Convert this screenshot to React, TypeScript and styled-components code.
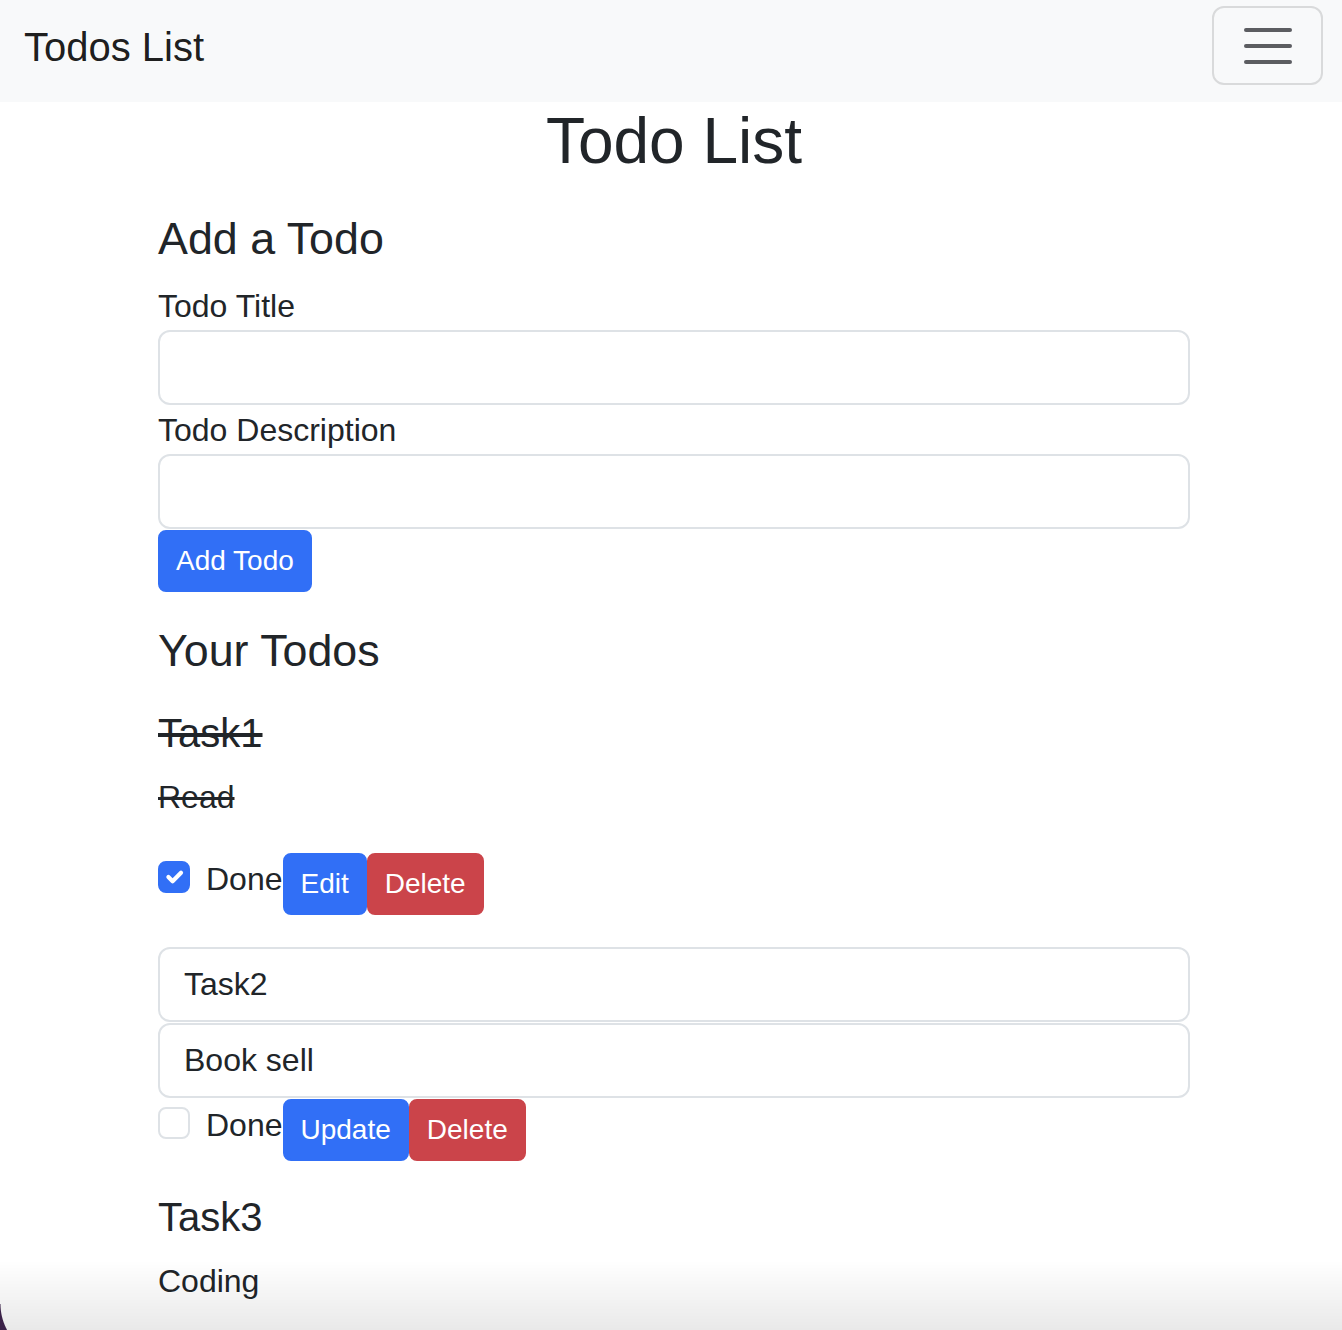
import React, { FC, useState } from 'react';
import styled, { createGlobalStyle } from 'styled-components';

const colors = {
  text: '#212529',
  navbar: '#f8f9fa',
  border: '#dee2e6',
  toggler: '#d9dadb',
  togglerIcon: '#5c5d61',
  primary: '#316ff6',
  danger: '#cb444a',
};

const GlobalStyle = createGlobalStyle`
  *, *::before, *::after {
    box-sizing: border-box;
  }
  html, body {
    margin: 0;
    padding: 0;
    overflow: hidden;
    background: #fff;
  }
  body {
    font-family: "Liberation Sans", Arial, Helvetica, sans-serif;
    font-size: 32px;
    line-height: 1.5;
    color: ${colors.text};
  }
`;

const Navbar = styled.nav`
  display: flex;
  justify-content: space-between;
  align-items: flex-start;
  height: 102px;
  padding: 6px 19px 0 24px;
  background-color: ${colors.navbar};
`;

const Brand = styled.a`
  margin-top: 11px;
  font-size: 40px;
  line-height: 60px;
  color: rgba(0, 0, 0, 0.9);
  text-decoration: none;
`;

const Toggler = styled.button`
  display: flex;
  align-items: center;
  justify-content: center;
  width: 111px;
  height: 79px;
  padding: 0;
  background: transparent;
  border: 2px solid ${colors.toggler};
  border-radius: 12px;
  cursor: pointer;
`;

const Container = styled.main`
  display: flex;
  flex-direction: column;
  width: 1032px;
  margin-left: 158px;
  padding-top: 1px;
`;

const PageTitle = styled.h1`
  margin: 0 0 16px;
  font-size: 64px;
  font-weight: 500;
  line-height: 1.2;
  text-align: center;
`;

const Section = styled.section<{ $gap: number }>`
  margin-top: ${(p) => p.$gap}px;
`;

const SectionTitle = styled.h4`
  margin: 0 0 16px;
  font-size: 44.8px;
  font-weight: 500;
  line-height: 1.2;
`;

const FormLabel = styled.label`
  display: block;
  line-height: 48px;
`;

const FormInput = styled.input`
  display: block;
  width: 100%;
  height: 75px;
  margin: 0 0 1px;
  padding: 12px 24px;
  font-family: inherit;
  font-size: 32px;
  line-height: 48px;
  color: ${colors.text};
  background: #fff;
  border: 2px solid ${colors.border};
  border-radius: 12px;
  outline: none;
`;

const ButtonRow = styled.div`
  display: flex;
  align-items: flex-start;
`;

const Button = styled.button<{ $variant: 'primary' | 'danger' }>`
  padding: 8px 16px;
  font-family: inherit;
  font-size: 28px;
  line-height: 42px;
  color: #fff;
  background-color: ${(p) => colors[p.$variant]};
  border: 2px solid ${(p) => colors[p.$variant]};
  border-radius: 8px;
  cursor: pointer;
`;

const TodoList = styled.div`
  display: flex;
  flex-direction: column;
  gap: 32px;
  padding-top: 16px;
`;

const TodoItem = styled.div``;

const TodoTitle = styled.h5<{ $done: boolean }>`
  margin: 0 0 16px;
  font-size: 40px;
  font-weight: 500;
  line-height: 1.2;
  text-decoration: ${(p) => (p.$done ? 'line-through' : 'none')};
`;

const TodoDesc = styled.p<{ $done: boolean }>`
  margin: 0 0 32px;
  line-height: 48px;
  text-decoration: ${(p) => (p.$done ? 'line-through' : 'none')};
`;

const FormCheck = styled.label`
  position: relative;
  display: flex;
  align-items: flex-start;
  cursor: pointer;
`;

const HiddenCheckbox = styled.input`
  position: absolute;
  width: 0;
  height: 0;
  opacity: 0;
`;

const CheckBox = styled.span<{ $checked: boolean }>`
  display: flex;
  align-items: center;
  justify-content: center;
  width: 32px;
  height: 32px;
  margin: 8px 16px 0 0;
  background-color: ${(p) => (p.$checked ? colors.primary : '#fff')};
  border: 2px solid ${(p) => (p.$checked ? colors.primary : colors.border)};
  border-radius: 8px;
`;

const CheckText = styled.span`
  padding-top: 2px;
  line-height: 48px;
`;

const BottomFade = styled.div`
  position: fixed;
  left: 0;
  right: 0;
  bottom: 0;
  height: 70px;
  background: linear-gradient(to bottom, rgba(0, 0, 0, 0), rgba(0, 0, 0, 0.085));
  pointer-events: none;
`;

const WindowCorner = styled.div`
  position: fixed;
  left: 0;
  bottom: 0;
  width: 12px;
  height: 26px;
  background: radial-gradient(circle 55px at 55px 0, transparent 54px, #3a2148 55px);
  pointer-events: none;
`;

type Todo = {
  id: number;
  title: string;
  desc: string;
  done: boolean;
  editing: boolean;
};

const initialTodos: Todo[] = [
  { id: 1, title: 'Task1', desc: 'Read', done: true, editing: false },
  { id: 2, title: 'Task2', desc: 'Book sell', done: false, editing: true },
  { id: 3, title: 'Task3', desc: 'Coding', done: false, editing: false },
];

const MenuIcon: FC = () => (
  <svg width="48" height="36" viewBox="0 0 48 36" aria-hidden="true">
    <g stroke={colors.togglerIcon} strokeWidth="4" strokeLinecap="round">
      <line x1="2" y1="2" x2="46" y2="2" />
      <line x1="2" y1="18" x2="46" y2="18" />
      <line x1="2" y1="34" x2="46" y2="34" />
    </g>
  </svg>
);

const CheckMark: FC = () => (
  <svg width="30" height="30" viewBox="0 0 20 20" aria-hidden="true">
    <path
      d="m6 10 3 3 6-6"
      fill="none"
      stroke="#fff"
      strokeWidth="3"
      strokeLinecap="round"
      strokeLinejoin="round"
    />
  </svg>
);

const DoneCheck: FC<{ checked: boolean; onChange: () => void }> = ({
  checked,
  onChange,
}) => (
  <FormCheck>
    <HiddenCheckbox type="checkbox" checked={checked} onChange={onChange} />
    <CheckBox $checked={checked}>{checked && <CheckMark />}</CheckBox>
    <CheckText>Done</CheckText>
  </FormCheck>
);

const App: FC = () => {
  const [todos, setTodos] = useState<Todo[]>(initialTodos);
  const [title, setTitle] = useState('');
  const [desc, setDesc] = useState('');

  const patch = (id: number, changes: Partial<Todo>) =>
    setTodos((list) => list.map((t) => (t.id === id ? { ...t, ...changes } : t)));

  const remove = (id: number) => setTodos((list) => list.filter((t) => t.id !== id));

  const add = () => {
    if (!title.trim()) return;
    setTodos((list) => [
      ...list,
      { id: Date.now(), title, desc, done: false, editing: false },
    ]);
    setTitle('');
    setDesc('');
  };

  return (
    <>
      <GlobalStyle />
      <Navbar>
        <Brand href="#">Todos List</Brand>
        <Toggler type="button" aria-label="Toggle navigation">
          <MenuIcon />
        </Toggler>
      </Navbar>
      <Container>
        <PageTitle>Todo List</PageTitle>
        <Section $gap={16}>
          <SectionTitle>Add a Todo</SectionTitle>
          <FormLabel htmlFor="todo-title">Todo Title</FormLabel>
          <FormInput
            id="todo-title"
            value={title}
            onChange={(e) => setTitle(e.target.value)}
          />
          <FormLabel htmlFor="todo-desc">Todo Description</FormLabel>
          <FormInput
            id="todo-desc"
            value={desc}
            onChange={(e) => setDesc(e.target.value)}
          />
          <ButtonRow>
            <Button $variant="primary" type="button" onClick={add}>
              Add Todo
            </Button>
          </ButtonRow>
        </Section>
        <Section $gap={32}>
          <SectionTitle>Your Todos</SectionTitle>
          <TodoList>
            {todos.map((todo) => (
              <TodoItem key={todo.id}>
                {todo.editing ? (
                  <>
                    <FormInput
                      value={todo.title}
                      onChange={(e) => patch(todo.id, { title: e.target.value })}
                    />
                    <FormInput
                      value={todo.desc}
                      onChange={(e) => patch(todo.id, { desc: e.target.value })}
                    />
                  </>
                ) : (
                  <>
                    <TodoTitle $done={todo.done}>{todo.title}</TodoTitle>
                    <TodoDesc $done={todo.done}>{todo.desc}</TodoDesc>
                  </>
                )}
                <ButtonRow>
                  <DoneCheck
                    checked={todo.done}
                    onChange={() => patch(todo.id, { done: !todo.done })}
                  />
                  <Button
                    $variant="primary"
                    type="button"
                    onClick={() => patch(todo.id, { editing: !todo.editing })}
                  >
                    {todo.editing ? 'Update' : 'Edit'}
                  </Button>
                  <Button $variant="danger" type="button" onClick={() => remove(todo.id)}>
                    Delete
                  </Button>
                </ButtonRow>
              </TodoItem>
            ))}
          </TodoList>
        </Section>
      </Container>
      <BottomFade />
      <WindowCorner />
    </>
  );
};

export default App;
